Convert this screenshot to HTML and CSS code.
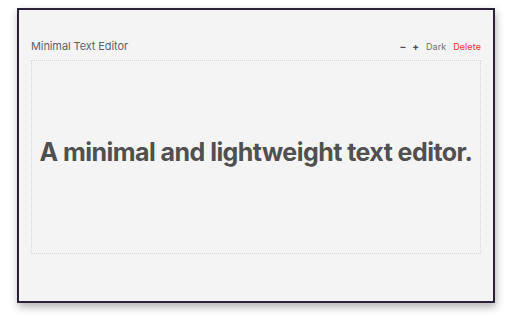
FILE: index.html
```html
<!DOCTYPE html>
<html>
<head>
<meta charset="utf-8">
<link rel="stylesheet" href="styles.css">
</head>
<body>
<div class="window">
  <div class="header">
    <span class="title">Minimal Text Editor</span>
    <div class="controls">
      <span class="ctl sign">&minus;</span>
      <span class="ctl sign">+</span>
      <span class="ctl dark">Dark</span>
      <span class="ctl delete">Delete</span>
    </div>
  </div>
  <div class="editor">
    <p class="headline">A minimal and lightweight text editor.</p>
  </div>
</div>
</body>
</html>
```
FILE: styles.css
```css
html, body {
  margin: 0;
  padding: 0;
  background: #ffffff;
}
body {
  width: 512px;
  height: 320px;
  padding: 8px 0 0 17px;
  box-sizing: border-box;
  font-family: Inter, "Liberation Sans", sans-serif;
}
.window {
  width: 478px;
  height: 295px;
  box-sizing: border-box;
  background: #f4f4f4;
  border: 2px solid #2b2138;
  box-shadow: 1px 4px 8px rgba(0, 0, 0, 0.3);
  padding: 29px 12px 0 12px;
}
.header {
  display: flex;
  justify-content: space-between;
  align-items: center;
  height: 14px;
  margin-bottom: 7px;
}
.title {
  font-size: 11px;
  color: #5d6270;
  letter-spacing: -0.1px;
}
.controls {
  display: flex;
  align-items: center;
  gap: 6px;
  font-size: 9px;
}
.ctl.sign {
  color: #4a4d55;
  font-weight: 700;
  font-size: 10px;
}
.ctl.dark {
  color: #6b7079;
  margin-left: 1px;
}
.ctl.delete {
  color: #ff2d2d;
  letter-spacing: 0.1px;
  margin-left: 1px;
}
.editor {
  height: 194px;
  box-sizing: border-box;
  border: 1px dotted #d6d6d6;
  display: flex;
  align-items: center;
  justify-content: center;
}
.headline {
  margin: 0 0 10px 0;
  font-size: 25px;
  font-weight: 700;
  color: #505050;
  letter-spacing: -0.55px;
  white-space: nowrap;
}
```
